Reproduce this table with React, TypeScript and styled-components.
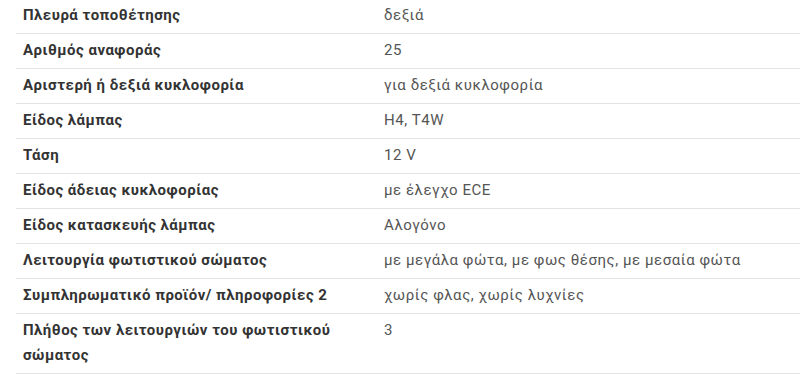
import styled, { createGlobalStyle } from "styled-components";

const GlobalStyle = createGlobalStyle`
  html, body {
    margin: 0;
    padding: 0;
    background: #fff;
    font-family: Roboto, "Liberation Sans", Arial, sans-serif;
  }
`;

const rows = [
  { name: "Πλευρά τοποθέτησης", value: "δεξιά" },
  { name: "Αριθμός αναφοράς", value: "25" },
  { name: "Αριστερή ή δεξιά κυκλοφορία", value: "για δεξιά κυκλοφορία" },
  { name: "Είδος λάμπας", value: "H4, T4W" },
  { name: "Τάση", value: "12 V" },
  { name: "Είδος άδειας κυκλοφορίας", value: "με έλεγχο ECE" },
  { name: "Είδος κατασκευής λάμπας", value: "Αλογόνο" },
  {
    name: "Λειτουργία φωτιστικού σώματος",
    value: "με μεγάλα φώτα, με φως θέσης, με μεσαία φώτα",
  },
  {
    name: "Συμπληρωματικό προϊόν/ πληροφορίες 2",
    value: "χωρίς φλας, χωρίς λυχνίες",
  },
  { name: "Πλήθος των λειτουργιών του φωτιστικού σώματος", value: "3" },
];

const App = () => {
  return (
    <>
      <GlobalStyle />
      <Wrapper>
        <SpecTable>
          <tbody>
            {rows.map((item, index) => (
              <SpecRow key={`row${index}`}>
                <SpecName>{item.name}</SpecName>
                <SpecValue>{item.value}</SpecValue>
              </SpecRow>
            ))}
          </tbody>
        </SpecTable>
      </Wrapper>
    </>
  );
};
export default App;

const Wrapper = styled.div`
  padding-left: 16px;
  margin-top: -1px;
  width: 800px;
  box-sizing: border-box;
`;
const SpecTable = styled.table`
  width: 100%;
  border-collapse: collapse;
`;
const SpecRow = styled.tr`
  border-bottom: 1px solid #e3e3e3;
`;
const SpecName = styled.td`
  width: 345px;
  padding: 4px 8px 5px 7px;
  color: #333;
  font-size: 15px;
  font-weight: 700;
  letter-spacing: 0.5px;
  line-height: 25px;
  vertical-align: top;
`;
const SpecValue = styled.td`
  padding: 4px 8px 5px 8px;
  color: #555;
  font-size: 15px;
  font-weight: 400;
  letter-spacing: 0.55px;
  line-height: 25px;
  vertical-align: top;
`;
